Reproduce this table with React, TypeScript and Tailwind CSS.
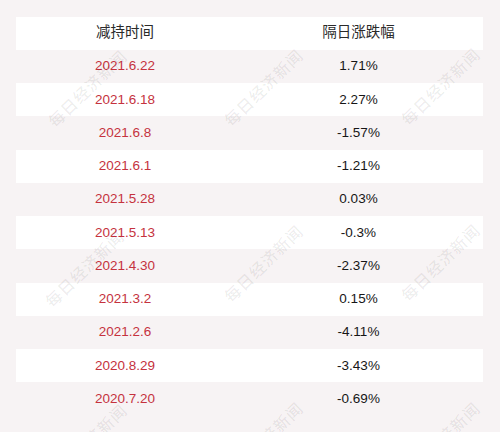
import React from 'react';

const ROWS = [
  { date: '2021.6.22', change: '1.71%' },
  { date: '2021.6.18', change: '2.27%' },
  { date: '2021.6.8', change: '-1.57%' },
  { date: '2021.6.1', change: '-1.21%' },
  { date: '2021.5.28', change: '0.03%' },
  { date: '2021.5.13', change: '-0.3%' },
  { date: '2021.4.30', change: '-2.37%' },
  { date: '2021.3.2', change: '0.15%' },
  { date: '2021.2.6', change: '-4.11%' },
  { date: '2020.8.29', change: '-3.43%' },
  { date: '2020.7.20', change: '-0.69%' },
];

// watermark centres, laid out as a 3x3 grid over the table
const MARKS = [
  { x: 87, y: 88 },
  { x: 263, y: 87 },
  { x: 440, y: 86 },
  { x: 84, y: 268 },
  { x: 263, y: 263 },
  { x: 440, y: 262 },
  { x: 87, y: 442 },
  { x: 263, y: 440 },
  { x: 440, y: 440 },
];

const App = () => {
  return (
    <div
      className="relative w-[500px] h-[432px] overflow-hidden bg-[#f7f3f4] pt-[16.7px] px-[16px]"
      style={{ fontFamily: '"Liberation Sans", Arial, "Noto Sans CJK SC", sans-serif' }}
    >
      <div className="w-[467px]">
        <div className="flex h-[33.25px] items-center bg-white text-[14.5px] text-[#2a2a2a]">
          <div className="w-[218px] text-center">减持时间</div>
          <div className="flex-1 text-center">隔日涨跌幅</div>
        </div>
        {ROWS.map((row, i) => (
          <div
            key={row.date}
            className={
              i % 2 === 1
                ? 'flex h-[33.25px] items-center bg-white text-[13.5px]'
                : 'flex h-[33.25px] items-center text-[13.5px]'
            }
          >
            <div className="w-[218px] text-center text-[#c5323e]">{row.date}</div>
            <div className="flex-1 text-center text-[#161616]">{row.change}</div>
          </div>
        ))}
      </div>

      {/* watermark */}
      {MARKS.map((m, i) => (
        <span
          key={i}
          className="pointer-events-none absolute -translate-x-1/2 -translate-y-1/2 -rotate-[44deg] whitespace-nowrap text-[16px] font-medium tracking-[1px] text-[rgba(0,0,0,0.075)]"
          style={{ left: m.x, top: m.y, fontFamily: '"Noto Sans CJK SC", sans-serif' }}
        >
          每日经济新闻
        </span>
      ))}
    </div>
  );
};

export default App;
